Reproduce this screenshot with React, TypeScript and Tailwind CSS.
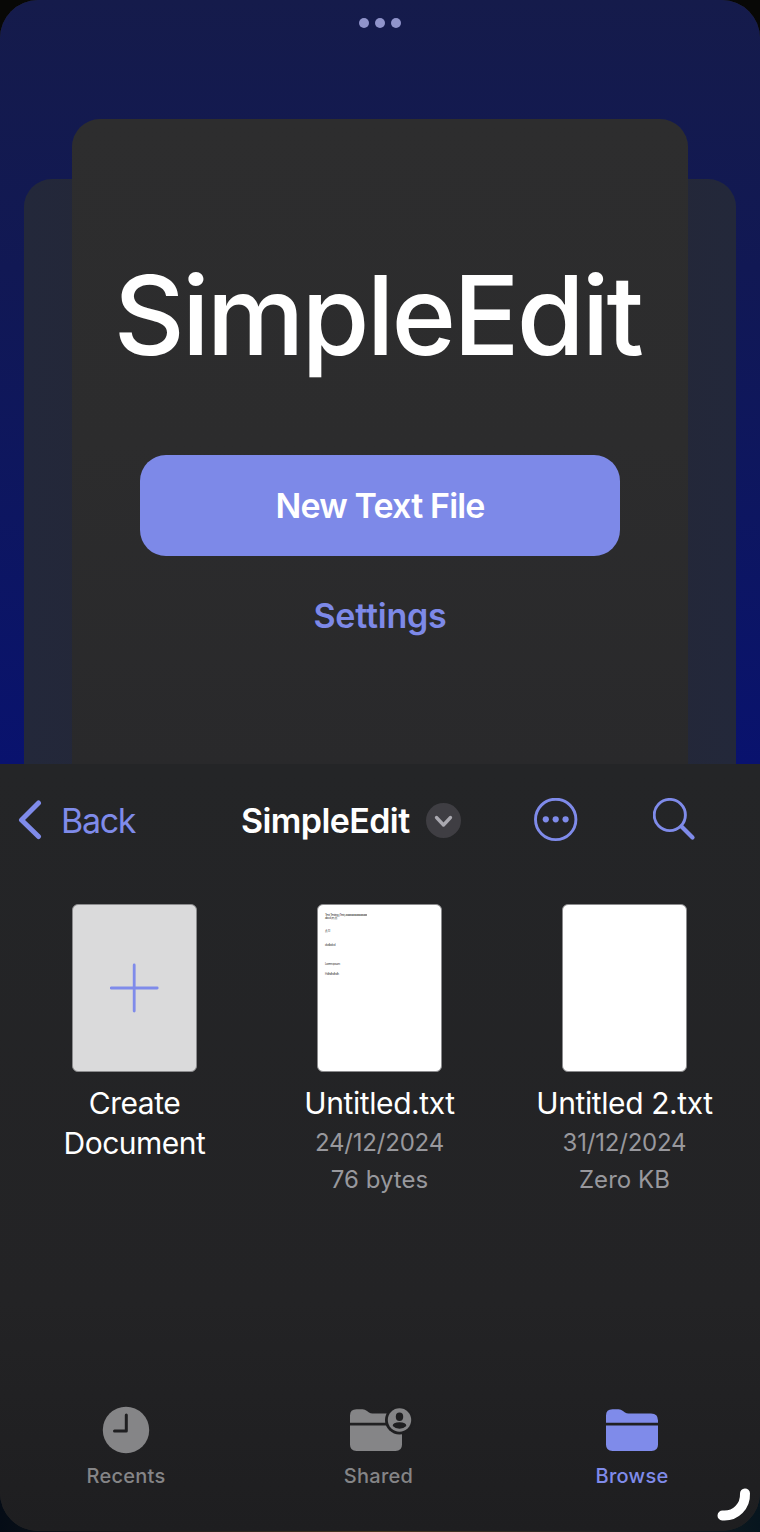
import React from 'react';

const accent = '#7f8bea';

function MultitaskingDots() {
  return (
    <div className="flex h-[46px] items-center justify-center gap-[6px]">
      <span className="h-[10px] w-[10px] rounded-full bg-[#9094cb]" />
      <span className="h-[10px] w-[10px] rounded-full bg-[#9094cb]" />
      <span className="h-[10px] w-[10px] rounded-full bg-[#9094cb]" />
    </div>
  );
}

function Hero() {
  return (
    <section className="flex h-[764px] flex-col overflow-hidden bg-linear-to-b from-[#151b4b] via-[#111854] via-35% to-[#09126e]">
      <MultitaskingDots />
      <div className="grid flex-1 pt-[73px]">
        <div className="col-start-1 row-start-1 mx-6 mt-[60px] rounded-t-[28px] bg-linear-to-r from-[#23283a] via-[#252436] to-[#23283a]" />
        <div className="z-10 col-start-1 row-start-1 mx-[72px] flex flex-col items-center rounded-t-[28px] bg-linear-to-b from-[#2d2d2e] via-[#2c2c2d] to-[#29292b]">
          <h1 className="mt-[128px] mr-[5px] whitespace-nowrap text-[110px] leading-[136px] font-[540] tracking-[-2.9px] text-white">SimpleEdit</h1>
          <button className="mt-[72px] h-[101px] w-[480px] rounded-[26px] bg-[#7d89e8] text-[34px] font-semibold tracking-[-0.85px] text-white">
            New Text File
          </button>
          <button className="mt-[37px] text-[34px] leading-[46px] font-semibold tracking-[-0.2px] text-[#7d89e8]">Settings</button>
        </div>
      </div>
    </section>
  );
}

function NavBar() {
  return (
    <header className="flex h-[112px] items-center text-[34px]">
      <button className="flex w-[241px] items-center pl-[18px] tracking-[-1.3px] text-[#7f8bea]">
        <svg width="24" height="42" viewBox="0 0 24 42" fill="none" stroke={accent} strokeWidth="5" strokeLinecap="round" strokeLinejoin="round">
          <path d="M20.500 4L3.500 21L20.500 37.500" />
        </svg>
        <span className="ml-[19px]">Back</span>
      </button>
      <div className="flex w-[293px] items-center font-semibold tracking-[-0.6px] text-white">
        <span className="w-[185px]">SimpleEdit</span>
        <svg width="35" height="35" viewBox="0 0 35 35" fill="none" className="mt-[1px]">
          <circle cx="17.500" cy="17.500" r="17.500" fill="#3f3e43" />
          <path d="M10.500 14.500L17.500 22L24.500 14.500" stroke="#aaa9b0" strokeWidth="3.300" strokeLinecap="round" strokeLinejoin="round" />
        </svg>
      </div>
      <svg width="44" height="44" viewBox="0 0 44 44" fill="none">
        <circle cx="21.700" cy="21.400" r="20.200" stroke={accent} strokeWidth="2.900" />
        <circle cx="11.800" cy="21.300" r="3.100" fill={accent} />
        <circle cx="21.700" cy="21.300" r="3.100" fill={accent} />
        <circle cx="31.600" cy="21.300" r="3.100" fill={accent} />
      </svg>
      <svg width="44" height="44" viewBox="0 0 44 44" fill="none" stroke={accent} strokeLinecap="round" className="ml-[75px]">
        <circle cx="16.800" cy="17" r="15.600" strokeWidth="2.900" />
        <path d="M28.500 28.500L39.500 39.500" strokeWidth="4.200" />
      </svg>
    </header>
  );
}

const sheet = 'flex h-[168px] w-[125px] rounded-[6px] border border-[#8b8b8d]';

function TextPreview() {
  return (
    <div className="flex flex-col overflow-hidden pt-[9px] pl-[7px] text-left text-[3px] leading-[3px] tracking-[-0.33px] whitespace-nowrap text-[#333]">
      <span>Test Testing (Text) aaaaaaaaaaaaaaaa</span>
      <span>abcd (e) (f)</span>
      <span className="mt-[10px]">(f) 1.1</span>
      <span className="mt-[11px]">dvdbdvd</span>
      <span className="mt-[16px]">Lorem ipsum</span>
      <span className="mt-[7px]">Hdhdhdhdh</span>
    </div>
  );
}

function Details({ date, size }: { date: string; size: string }) {
  return (
    <div className="mt-px text-[24px] leading-[37px] tracking-[-0.2px] text-[#98989d]">
      <p>{date}</p>
      <p className="tracking-[0.05px]">{size}</p>
    </div>
  );
}

function Files() {
  return (
    <div className="grid flex-1 grid-cols-[245px_245px_245px] px-[12px] pt-[28px] text-center text-[30px] leading-[40px] tracking-[-0.4px] text-white">
      <article className="flex flex-col items-center">
        <div className={`${sheet} items-center justify-center bg-[#dadadb]`}>
          <svg width="50" height="50" viewBox="0 0 50 50" stroke={accent} strokeWidth="2.800" strokeLinecap="round">
            <path d="M24.200 2V48M1.200 25H47.200" />
          </svg>
        </div>
        <h2 className="mt-[11px] tracking-[-0.5px]">Create<br />Document</h2>
      </article>
      <article className="flex flex-col items-center">
        <div className={`${sheet} bg-white`}>
          <TextPreview />
        </div>
        <h2 className="mt-[11px]">Untitled.txt</h2>
        <Details date="24/12/2024" size="76 bytes" />
      </article>
      <article className="flex flex-col items-center">
        <div className={`${sheet} bg-white`} />
        <h2 className="mt-[11px]">Untitled 2.txt</h2>
        <Details date="31/12/2024" size="Zero KB" />
      </article>
    </div>
  );
}

function ClockIcon() {
  return (
    <svg width="64" height="48" viewBox="0 0 64 48" fill="none">
      <circle cx="32" cy="24" r="23.200" fill="#858587" />
      <path d="M32.300 9V25H20.500" stroke="#1f1f21" strokeWidth="3" strokeLinecap="round" strokeLinejoin="round" />
    </svg>
  );
}

function FolderIcon({ shared = false }: { shared?: boolean }) {
  const fill = shared ? '#858587' : accent;
  return (
    <svg width="72" height="48" viewBox={shared ? '-1 0 72 48' : '-4 0 72 48'} fill={fill}>
      <path d="M6 16.800V9.500Q6 3.300 12.500 3.300H18.500Q21 3.300 23 5L25 6.500Q26.500 7.500 28.500 7.500H51Q58 7.500 58 14.500V16.800Z" />
      <path d="M6 19.500H58V38.500Q58 45 51.500 45H12.500Q6 45 6 38.500Z" />
      {shared && (
        <g>
          <circle cx="55.500" cy="14" r="14.500" fill="#1f1f21" />
          <circle cx="55.500" cy="14" r="11.700" />
          <ellipse cx="55.500" cy="10.700" rx="3.700" ry="4.200" fill="#1f1f21" />
          <path d="M48.700 20Q48.700 16.300 55.500 16.300Q62.300 16.300 62.300 20Q59.700 22.700 55.500 22.700Q51.300 22.700 48.700 20Z" fill="#1f1f21" />
        </g>
      )}
    </svg>
  );
}

function TabBar() {
  return (
    <nav className="flex h-[131px] pt-[6px] text-[20px] leading-[26px] font-medium tracking-[0.25px] text-[#858587]">
      <button className="flex w-[252px] flex-col items-center gap-[9px]">
        <ClockIcon />
        Recents
      </button>
      <button className="flex w-[253px] flex-col items-center gap-[9px]">
        <FolderIcon shared />
        Shared
      </button>
      <button className="flex w-[254px] flex-col items-center gap-[9px] text-[#7f8bea]">
        <FolderIcon />
        Browse
      </button>
    </nav>
  );
}

export default function App() {
  return (
    <main className="relative h-[1532px] w-[760px] overflow-hidden bg-linear-to-r from-[#050c16] via-[#4a3820] to-[#07151e] font-['Inter','Liberation_Sans',sans-serif]">
      <div className="h-[90px] w-full bg-[#080806]" />
      <div className="relative -mt-[90px] flex h-[1531px] flex-col overflow-hidden rounded-[38px] bg-[#232325]">
        <Hero />
        <section className="flex flex-1 flex-col bg-linear-to-b from-[#242527] via-[#232325] via-70% to-[#1e1e20]">
          <NavBar />
          <Files />
          <TabBar />
        </section>
      </div>
      <svg className="absolute right-[8px] bottom-[10px]" width="36" height="34" viewBox="0 0 36 34" fill="none">
        <path d="M29 5.500C29.500 18 20 28.500 6.500 27.500" stroke="#fff" strokeWidth="10" strokeLinecap="round" />
      </svg>
    </main>
  );
}
